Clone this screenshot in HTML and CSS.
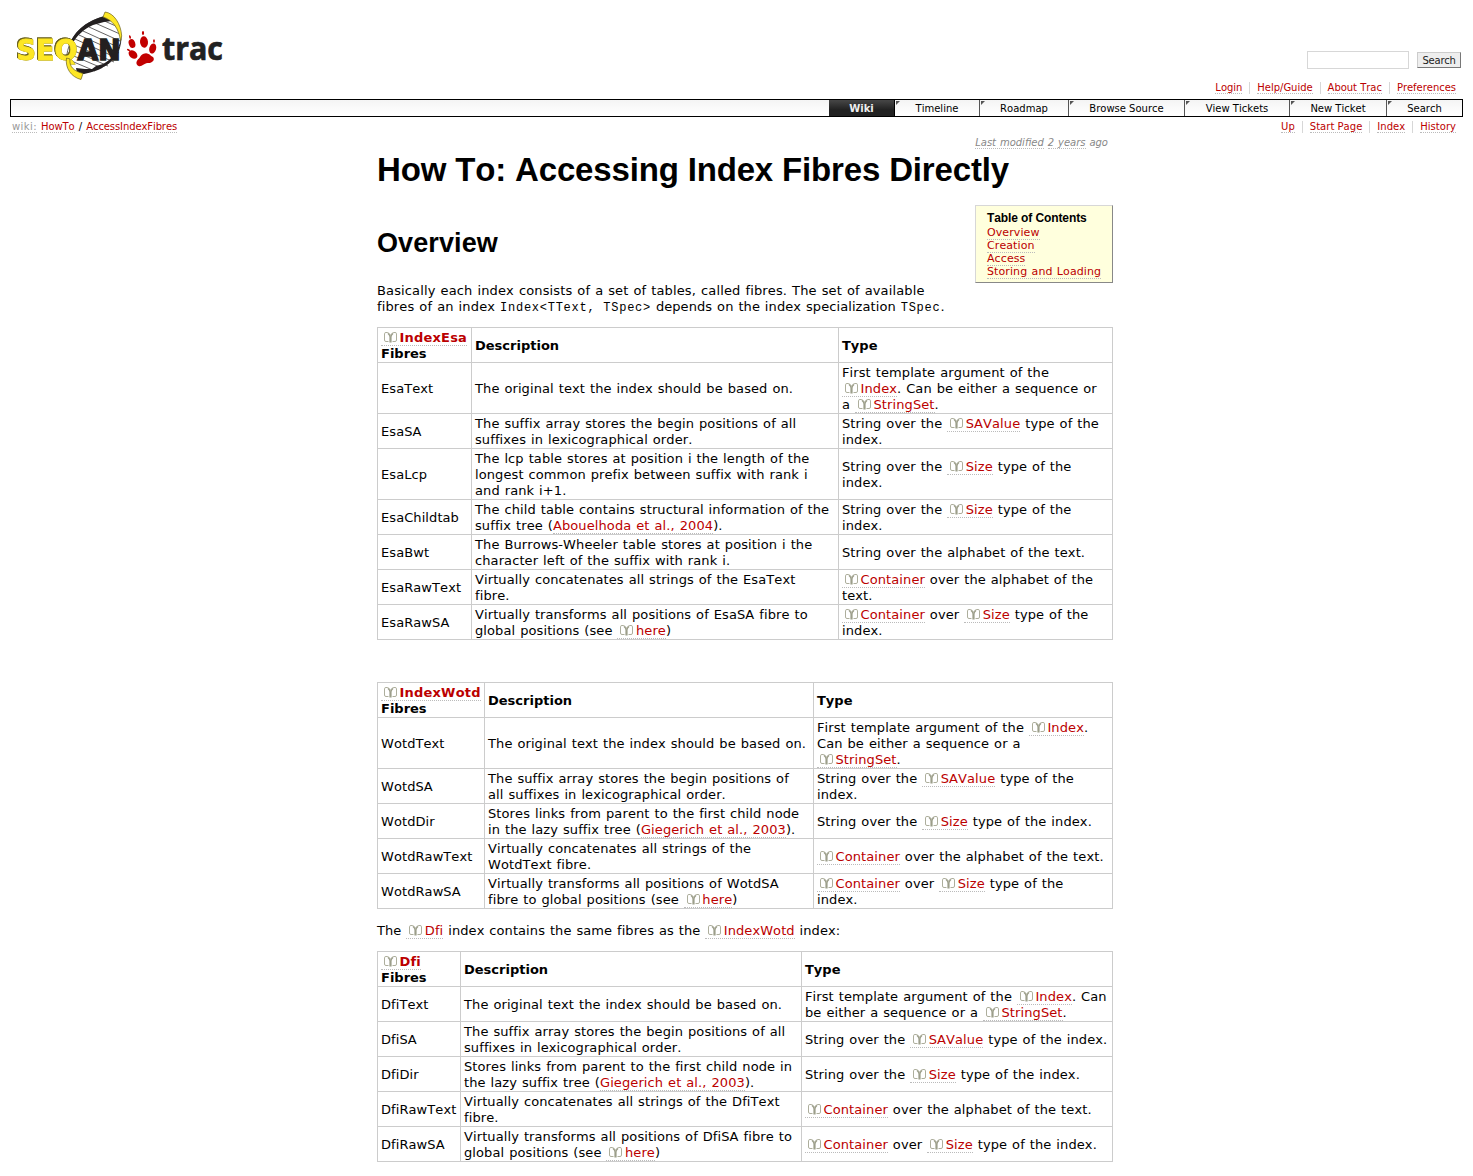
FILE: index.html
```html
<!DOCTYPE html>
<html lang="en">
<head>
<meta charset="utf-8">
<title>HowTo/AccessIndexFibres</title>
<link rel="stylesheet" href="styles.css">
</head>
<body>
<svg class="defs" width="0" height="0">
  <symbol id="book" viewBox="0 0 13 11">
    <path d="M4.500 9.500H2Q.5 9.500.5 8V1.800Q.5.500 2 .500H3Q5.500.700 6.500 3.500Q7.500.700 10 .500H11Q12.500.500 12.500 1.800V8Q12.500 9.500 11 9.500H8.500" fill="none" stroke="#adae9c" stroke-width="1"/>
    <path d="M4 1.500Q6 3 6 5V10.500M9 1.500Q7 3 7 5V10.500" fill="none" stroke="#9c9e8a" stroke-width="1.200"/>
  </symbol>
</svg>
<header class="banner">
  <svg class="logo" width="240" height="90" viewBox="0 0 240 90">
    <g stroke="#231f20" stroke-width=".7" fill="none">
      <path fill="#fff" d="M104 17C85 21 70 35 67 54C66 66 76 75 83 73C103 69 120 62 121 38C120 26 113 18 104 17Z"/>
      <path d="M95 23l25 11M89 27l31 14M83 31l37 17M79 35l40 18M75 39l42 19M72 44l42 18M70 49l38 17M69 54l33 14M69 60l26 11M100 19l18 8"/>
    </g>
    <path fill="#231f20" d="M105 16C88 20 74 31 70 44L73 43C76 37 82 31 89 27L93 25L104 22L112 21Z"/>
    <path fill="#231f20" d="M77 73L84 74C101 71 119 62 121.500 38C118 52 111 60 103 64L96 66L92 69L85 69L76 68Z"/>
    <text class="seqan seq" x="16.500" y="60" textLength="61" lengthAdjust="spacingAndGlyphs">SEQ</text>
    <text class="seqan an" x="77.500" y="60" textLength="43" lengthAdjust="spacingAndGlyphs">AN</text>
    <g fill="#fde725" stroke="#6b6220" stroke-width=".7">
      <path d="M105 12C114 13 121 24 121.700 36L120.500 41C119 29 113 20 103 17Z"/>
      <path d="M66.500 58C65 68 71 77 81 79.500L83 73.500C74 71 69 67 70 59Z"/>
    </g>
    <g fill="#c20000">
      <ellipse cx="132" cy="43.500" rx="3.200" ry="4.600" transform="rotate(-18 132 43.500)"/>
      <ellipse cx="144" cy="42" rx="4" ry="5.800" transform="rotate(-5 144 42)"/>
      <ellipse cx="152.700" cy="48.500" rx="3.400" ry="5.200" transform="rotate(16 152.700 48.500)"/>
      <ellipse cx="133" cy="54.500" rx="5" ry="3.600" transform="rotate(42 133 54.500)"/>
      <ellipse cx="130" cy="37" rx=".9" ry="1.800" transform="rotate(-15 130 37)"/>
      <ellipse cx="143" cy="33" rx="1.100" ry="2"/>
      <ellipse cx="154" cy="41" rx=".9" ry="1.800"/>
      <ellipse cx="128.500" cy="50" rx="1.700" ry=".9" transform="rotate(30 128.500 50)"/>
      <path d="M143 54C148 51.500 149.500 55 153 57C155.500 60 152 63.500 147.500 63C143.500 63.500 142 67 138.500 66C135 64 136.500 60.500 139 58.500C140.500 57 140.500 55 143 54Z"/>
    </g>
    <text class="trac" x="162" y="60" textLength="61" lengthAdjust="spacingAndGlyphs">trac</text>
  </svg>
  <div class="tools">
    <form class="search"><input type="text" aria-label="Search"><button type="button">Search</button></form>
    <ul class="links"><li><a>Login</a></li><li><a>Help/Guide</a></li><li><a>About Trac</a></li><li><a>Preferences</a></li></ul>
  </div>
</header>
<nav class="mainnav">
  <a class="active w66">Wiki</a><a class="w85">Timeline</a><a class="w89">Roadmap</a><a class="w116">Browse Source</a><a class="w105">View Tickets</a><a class="w97">New Ticket</a><a class="w75">Search</a>
</nav>
<div class="context">
  <div class="path"><a class="muted">wiki:</a> <a>HowTo</a> / <a>AccessIndexFibres</a></div>
  <ul class="links"><li><a>Up</a></li><li><a>Start Page</a></li><li><a>Index</a></li><li><a>History</a></li></ul>
</div>
<main class="wiki">
  <div class="modified"><a>Last modified</a> <a>2 years</a> ago</div>
  <h1>How To: Accessing Index Fibres Directly</h1>
  <aside class="toc">
    <h4>Table of Contents</h4>
    <ol><li><a>Overview</a></li><li><a>Creation</a></li><li><a>Access</a></li><li><a>Storing and Loading</a></li></ol>
  </aside>
  <h2>Overview</h2>
  <p class="intro"><span class="wide">Basically each index consists of a set of tables, called fibres. The set of available<br>fibres of an index </span><code>Index&lt;TText, TSpec&gt;</code> depends on the index specialization <code>TSpec</code>.</p>

  <table class="esa">
    <colgroup><col class="c1"><col class="c2"><col></colgroup>
    <tr><th><a><svg class="book"><use href="#book"/></svg>IndexEsa</a><br>Fibres</th><th>Description</th><th>Type</th></tr>
    <tr><td>EsaText</td><td>The original text the index should be based on.</td><td>First template argument of the<br><a><svg class="book"><use href="#book"/></svg>Index</a>. Can be either a sequence or<br>a <a><svg class="book"><use href="#book"/></svg>StringSet</a>.</td></tr>
    <tr><td>EsaSA</td><td>The suffix array stores the begin positions of all<br>suffixes in lexicographical order.</td><td>String over the <a><svg class="book"><use href="#book"/></svg>SAValue</a> type of the<br>index.</td></tr>
    <tr><td>EsaLcp</td><td>The lcp table stores at position i the length of the<br>longest common prefix between suffix with rank i<br>and rank i+1.</td><td>String over the <a><svg class="book"><use href="#book"/></svg>Size</a> type of the<br>index.</td></tr>
    <tr><td>EsaChildtab</td><td>The child table contains structural information of the<br>suffix tree (<a>Abouelhoda et al., 2004</a>).</td><td>String over the <a><svg class="book"><use href="#book"/></svg>Size</a> type of the<br>index.</td></tr>
    <tr><td>EsaBwt</td><td>The Burrows-Wheeler table stores at position i the<br>character left of the suffix with rank i.</td><td>String over the alphabet of the text.</td></tr>
    <tr><td>EsaRawText</td><td>Virtually concatenates all strings of the EsaText<br>fibre.</td><td><a><svg class="book"><use href="#book"/></svg>Container</a> over the alphabet of the<br>text.</td></tr>
    <tr><td>EsaRawSA</td><td>Virtually transforms all positions of EsaSA fibre to<br>global positions (see <a><svg class="book"><use href="#book"/></svg>here</a>)</td><td><a><svg class="book"><use href="#book"/></svg>Container</a> over <a><svg class="book"><use href="#book"/></svg>Size</a> type of the<br>index.</td></tr>
  </table>

  <table class="wotd">
    <colgroup><col class="c1"><col class="c2"><col></colgroup>
    <tr><th><a><svg class="book"><use href="#book"/></svg>IndexWotd</a><br>Fibres</th><th>Description</th><th>Type</th></tr>
    <tr><td>WotdText</td><td>The original text the index should be based on.</td><td>First template argument of the <a><svg class="book"><use href="#book"/></svg>Index</a>.<br>Can be either a sequence or a<br><a><svg class="book"><use href="#book"/></svg>StringSet</a>.</td></tr>
    <tr><td>WotdSA</td><td>The suffix array stores the begin positions of<br>all suffixes in lexicographical order.</td><td>String over the <a><svg class="book"><use href="#book"/></svg>SAValue</a> type of the<br>index.</td></tr>
    <tr><td>WotdDir</td><td>Stores links from parent to the first child node<br>in the lazy suffix tree (<a>Giegerich et al., 2003</a>).</td><td>String over the <a><svg class="book"><use href="#book"/></svg>Size</a> type of the index.</td></tr>
    <tr><td>WotdRawText</td><td>Virtually concatenates all strings of the<br>WotdText fibre.</td><td><a><svg class="book"><use href="#book"/></svg>Container</a> over the alphabet of the text.</td></tr>
    <tr><td>WotdRawSA</td><td>Virtually transforms all positions of WotdSA<br>fibre to global positions (see <a><svg class="book"><use href="#book"/></svg>here</a>)</td><td><a><svg class="book"><use href="#book"/></svg>Container</a> over <a><svg class="book"><use href="#book"/></svg>Size</a> type of the<br>index.</td></tr>
  </table>

  <p class="note">The <a><svg class="book"><use href="#book"/></svg>Dfi</a> index contains the same fibres as the <a><svg class="book"><use href="#book"/></svg>IndexWotd</a> index:</p>

  <table class="dfi">
    <colgroup><col class="c1"><col class="c2"><col></colgroup>
    <tr><th><a><svg class="book"><use href="#book"/></svg>Dfi</a><br>Fibres</th><th>Description</th><th>Type</th></tr>
    <tr><td>DfiText</td><td>The original text the index should be based on.</td><td>First template argument of the <a><svg class="book"><use href="#book"/></svg>Index</a>. Can<br>be either a sequence or a <a><svg class="book"><use href="#book"/></svg>StringSet</a>.</td></tr>
    <tr><td>DfiSA</td><td>The suffix array stores the begin positions of all<br>suffixes in lexicographical order.</td><td>String over the <a><svg class="book"><use href="#book"/></svg>SAValue</a> type of the index.</td></tr>
    <tr><td>DfiDir</td><td>Stores links from parent to the first child node in<br>the lazy suffix tree (<a>Giegerich et al., 2003</a>).</td><td>String over the <a><svg class="book"><use href="#book"/></svg>Size</a> type of the index.</td></tr>
    <tr><td>DfiRawText</td><td>Virtually concatenates all strings of the DfiText<br>fibre.</td><td><a><svg class="book"><use href="#book"/></svg>Container</a> over the alphabet of the text.</td></tr>
    <tr><td>DfiRawSA</td><td>Virtually transforms all positions of DfiSA fibre to<br>global positions (see <a><svg class="book"><use href="#book"/></svg>here</a>)</td><td><a><svg class="book"><use href="#book"/></svg>Container</a> over <a><svg class="book"><use href="#book"/></svg>Size</a> type of the index.</td></tr>
  </table>
</main>
</body>
</html>
```
FILE: styles.css
```css
* { box-sizing: border-box; }
body { margin: 0; padding: 0 10px; background: #fff; color: #000; font: 13px/16px "DejaVu Sans", Verdana, sans-serif; font-kerning: none; font-variant-ligatures: none; overflow-x: hidden; }
.defs { display: block; }
a { color: #b00; border-bottom: 1px dotted #bbb; }
ul, ol { list-style: none; margin: 0; padding: 0; }

.banner { display: flex; justify-content: space-between; align-items: flex-start; height: 99px; margin-left: -10px; }
.logo { display: block; flex: none; }
.seqan { font: bold 28px "DejaVu Sans", sans-serif; }
.seq { fill: #fde725; stroke: #fde725; stroke-width: .9px; filter: drop-shadow(.4px .4px .2px #6b6220) drop-shadow(-.4px -.4px .2px #6b6220); }
.an { fill: #231f20; stroke: #231f20; stroke-width: 1.5px; }
.trac { font: bold 32px "Open Sans", sans-serif; fill: #222; stroke: #222; stroke-width: .7px; }
.tools { display: flex; flex-direction: column; align-items: flex-end; padding-top: 51px; }
.search { display: flex; align-items: center; gap: 8px; margin-right: 2px; height: 18px; }
.search input { width: 102px; height: 18px; border: 1px solid #d7d7d7; padding: 0; background: #fff; }
.search button { width: 44px; height: 16px; padding: 0; border: 1px solid; border-color: #ccc #777 #777 #ccc; background: #eee; color: #222; font: 10px/13px "DejaVu Sans", sans-serif; letter-spacing: -.2px; }
.links { display: flex; align-items: flex-start; font-size: 10px; line-height: 12px; letter-spacing: .03px; }
.links li { padding: 0 7px; border-right: 1px solid #d7d7d7; }
.links li:last-child { border-right: 0; }
.tools .links { margin-top: 13px; letter-spacing: -.03px; }

.mainnav { display: flex; justify-content: flex-end; height: 18px; border: 1px solid #000; background: linear-gradient(#f4f4f4, #fff 90%); font-size: 10px; line-height: 17px; }
.mainnav a { position: relative; border: 0; border-right: 1px solid #555; color: #000; text-align: center; }
.mainnav a:last-child { border-right: 0; }
.mainnav a:not(.active)::before { content: ""; position: absolute; left: 1px; top: 1px; border-top: 4px solid #555; border-right: 4px solid transparent; }
.mainnav .active { background: linear-gradient(#444 5%, #222 60%); border-right-color: #000; color: #eee; font-weight: bold; }
.w66 { width: 66px; } .w85 { width: 85px; } .w89 { width: 89px; } .w116 { width: 116px; }
.w105 { width: 105px; } .w97 { width: 97px; } .w75 { width: 75px; }

.context { display: flex; justify-content: space-between; height: 19px; padding-top: 4px; font-size: 10px; line-height: 12px; }
.path { padding-left: 2px; word-spacing: 1.1px; letter-spacing: -.1px; }
.path .muted { color: #999; letter-spacing: .4px; }

.wiki { width: 736px; margin: 0 0 0 367px; white-space: nowrap; letter-spacing: .08px; word-spacing: .7px; }
.modified { height: 14px; padding-right: 5px; text-align: right; color: #888; font: italic 10px/13px "DejaVu Sans", sans-serif; letter-spacing: 0; }
.modified a { color: inherit; }
h1, h2, h4 { margin: 0; font-family: "Liberation Sans", Arial, sans-serif; letter-spacing: 0; word-spacing: 0; }
h1 { font-size: 33px; line-height: 40px; letter-spacing: -.16px; }
h2 { padding-top: 37px; font-size: 27px; line-height: 32px; letter-spacing: .1px; }
.toc { float: right; width: 138px; height: 78px; margin-top: 15px; padding: 5px 11px 0; border: 1px solid; border-color: #d7d7d7 #888 #888 #d7d7d7; background: #ffd; font-size: 11px; line-height: 13px; letter-spacing: .1px; }
.toc h4 { padding-bottom: 1px; font-size: 12px; line-height: 14px; letter-spacing: -.1px; }
.intro { margin: 24px 0 12px; }
.wide { letter-spacing: .14px; }
code { font: 12px/14px "Liberation Mono", monospace; letter-spacing: .74px; word-spacing: 0; }

table { width: 736px; table-layout: fixed; border-collapse: collapse; }
th, td { height: 35px; padding: 2px 3px 0; border: 1px solid #ccc; text-align: left; vertical-align: middle; }
th { letter-spacing: 0; }
td:nth-child(2) { letter-spacing: .1px; }
td:nth-child(3) { letter-spacing: .1px; }
th a { letter-spacing: .2px; }
.esa { margin-bottom: 42px; }
.esa .c1 { width: 94px; } .esa .c2 { width: 367px; }
.wotd .c1 { width: 107px; } .wotd .c2 { width: 329px; }
.dfi .c1 { width: 83px; } .dfi .c2 { width: 341px; }
.note { margin: 14px 0 12px; }
.book { width: 13px; height: 11px; margin: 0 2.500px 0 3px; vertical-align: -1px; }
```
